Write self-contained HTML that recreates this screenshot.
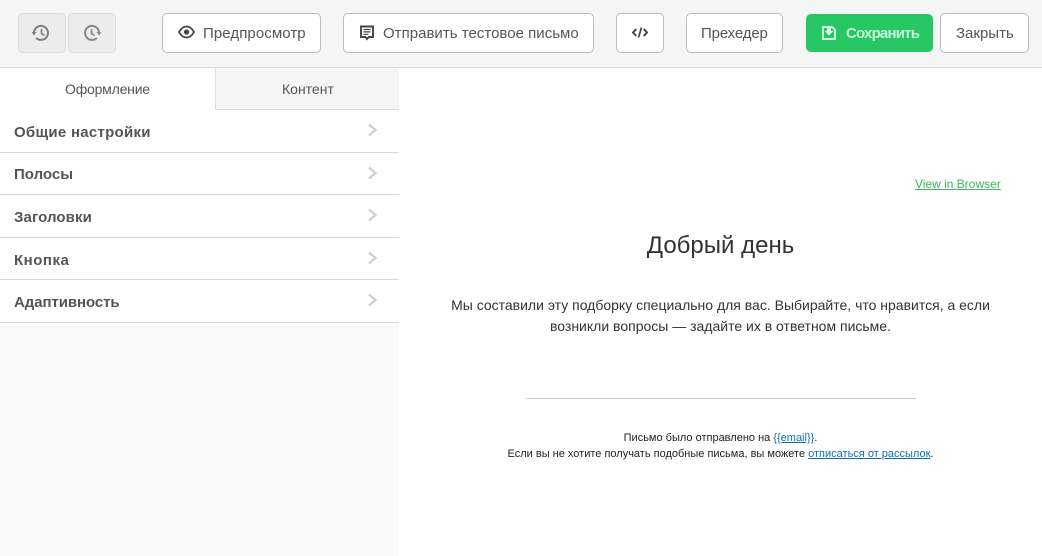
<!DOCTYPE html>
<html lang="ru">
<head>
<meta charset="utf-8">
<style>
html,body{margin:0;padding:0;width:1042px;height:556px;overflow:hidden;background:#fff;font-family:"Liberation Sans",sans-serif}
*{box-sizing:border-box}
.a{position:absolute}
#bar{left:0;top:0;width:1042px;height:68px;background:#f5f5f5;border-bottom:1px solid #ddd}
.b{position:absolute;top:13px;height:40px;background:#fff;border:1px solid #bbb;border-radius:5px;color:#555;font-size:15px;line-height:38px;white-space:nowrap}
.b span{position:absolute;top:1px;white-space:nowrap}
.h{background:#ececec;border-color:#ddd}
svg{position:absolute;display:block}
#side{left:0;top:68px;width:399px;height:488px;background:#fafafa}
.t{position:absolute;font-size:14px;color:#555;white-space:nowrap}
.r{position:absolute;left:0;width:399px;background:#fff;border-bottom:1px solid #d9d9d9}
.r span{position:absolute;left:14px;font-size:15px;font-weight:bold;color:#555;white-space:nowrap}
.r svg{left:367px}
.c{position:absolute;text-align:center;white-space:nowrap;color:#333}
a{color:#0f6fb5;text-decoration:underline}
</style>
</head>
<body>
<div class="a" id="bar"></div>

<div class="b h" style="left:18px;width:48px">
<svg style="left:13px;top:10px" width="20" height="18" viewBox="0 0 20 18"><path d="M2 9a7 7 0 1 1 2.200 5" fill="none" stroke="#808080" stroke-width="2"/><path d="M-.5 8h5L2 11.500z" fill="#808080"/><path d="M9.500 5v4.600l3 1.800" fill="none" stroke="#808080" stroke-width="1.700"/></svg>
</div>
<div class="b h" style="left:68px;width:48px">
<svg style="left:14px;top:10px" width="20" height="18" viewBox="0 0 20 18"><path d="M16 9a7 7 0 1 0-2.200 5" fill="none" stroke="#888" stroke-width="2"/><path d="M13.500 8h5L16 11.500z" fill="#888"/><path d="M8.500 5v4.600l3 1.800" fill="none" stroke="#888" stroke-width="1.700"/></svg>
</div>

<div class="b" style="left:162px;width:159px">
<svg style="left:15px;top:11px" width="17" height="14" viewBox="0 0 17 14"><path d="M1 7c2-3.700 4.500-5.500 7.500-5.500S14 3.300 16 7c-2 3.700-4.500 5.500-7.500 5.500S3 10.700 1 7z" fill="none" stroke="#444" stroke-width="1.800"/><circle cx="8.500" cy="7" r="2.600" fill="#444"/></svg>
<span style="left:40px;letter-spacing:.08px">Предпросмотр</span>
</div>

<div class="b" style="left:343px;width:251px">
<svg style="left:16px;top:11px" width="14" height="16" viewBox="0 0 14 16"><path d="M1 1.500h12v10.500H8.700L7 14l-1.700-2H1z" fill="none" stroke="#444" stroke-width="1.900"/><path d="M3.500 4.500h7M3.500 6.900h7M3.500 9.300h5" stroke="#444" stroke-width="1.200"/></svg>
<span style="left:39px;letter-spacing:.02px">Отправить тестовое письмо</span>
</div>

<div class="b" style="left:616px;width:48px">
<svg style="left:15px;top:12px" width="16" height="13" viewBox="0 0 16 13"><path d="M4.200 3L1 6.500l3.200 3.500M11.800 3L15 6.500 11.800 10" fill="none" stroke="#444" stroke-width="2"/><path d="M9.500 1.500L6.500 11.500" stroke="#444" stroke-width="1.700"/></svg>
</div>

<div class="b" style="left:686px;width:97px"><span style="left:14px;letter-spacing:-.15px">Прехедер</span></div>

<div class="b" style="left:806px;top:14px;width:127px;height:38px;background:#26c764;border:0;color:#c9f7da;font-weight:bold;line-height:38px">
<svg style="left:15px;top:11px" width="16" height="16" viewBox="0 0 16 16"><path d="M1 1h10.500L15 4.500V15H1z" fill="#d8f9e4"/><path d="M3 3h8l2 2.500V13H3z" fill="#26c764"/><path d="M6 2h4v4h2.300L8 10.500 3.700 6H6z" fill="#d8f9e4"/></svg>
<span style="left:40px;letter-spacing:-.8px;top:1px">Сохранить</span>
</div>

<div class="b" style="left:940px;width:89px"><span style="left:15px">Закрыть</span></div>

<div class="a" id="side"></div>
<div class="a" style="left:0;top:68px;width:215px;height:42px;background:#fff"></div>
<div class="a" style="left:215px;top:68px;width:184px;height:42px;background:#f5f5f5;border-left:1px solid #ddd;border-bottom:1px solid #ddd"></div>
<div class="t" style="left:65px;top:81px;letter-spacing:-.2px">Оформление</div>
<div class="t" style="left:282px;top:81px">Контент</div>

<div class="r" style="top:110px;height:43px"><span style="top:14px;letter-spacing:.27px">Общие настройки</span><svg style="top:13px" width="12" height="14" viewBox="0 0 12 14"><path d="M2 1.500L8.500 7 2 12.500" fill="none" stroke="#d0d0d0" stroke-width="2.400"/></svg></div>
<div class="r" style="top:153px;height:42px"><span style="top:13px">Полосы</span><svg style="top:13px" width="12" height="14" viewBox="0 0 12 14"><path d="M2 1.500L8.500 7 2 12.500" fill="none" stroke="#d0d0d0" stroke-width="2.400"/></svg></div>
<div class="r" style="top:195px;height:43px"><span style="top:14px;letter-spacing:.1px">Заголовки</span><svg style="top:13px" width="12" height="14" viewBox="0 0 12 14"><path d="M2 1.500L8.500 7 2 12.500" fill="none" stroke="#d0d0d0" stroke-width="2.400"/></svg></div>
<div class="r" style="top:238px;height:42px"><span style="top:14px;letter-spacing:.5px">Кнопка</span><svg style="top:13px" width="12" height="14" viewBox="0 0 12 14"><path d="M2 1.500L8.500 7 2 12.500" fill="none" stroke="#d0d0d0" stroke-width="2.400"/></svg></div>
<div class="r" style="top:280px;height:43px"><span style="top:14px;letter-spacing:-.08px">Адаптивность</span><svg style="top:13px" width="12" height="14" viewBox="0 0 12 14"><path d="M2 1.500L8.500 7 2 12.500" fill="none" stroke="#d0d0d0" stroke-width="2.400"/></svg></div>

<a class="a" style="left:915px;top:177px;font-size:12px;color:#3cb55c;white-space:nowrap">View in Browser</a>
<div class="c" style="left:399px;width:643px;top:232px;font-size:24px;line-height:28px">Добрый день</div>
<div class="c" style="left:399px;width:643px;top:295px;font-size:14px;line-height:21px">Мы составили эту подборку специально для вас. Выбирайте, что нравится, а если<br>возникли вопросы — задайте их в ответном письме.</div>
<div class="a" style="left:526px;top:398px;width:390px;height:1px;background:#ccc"></div>
<div class="c" style="left:399px;width:643px;top:430px;font-size:11px;line-height:16px;color:#222">Письмо было отправлено на <a>{{email}}</a>.<br>Если вы не хотите получать подобные письма, вы можете <a>отписаться от рассылок</a>.</div>
</body>
</html>
